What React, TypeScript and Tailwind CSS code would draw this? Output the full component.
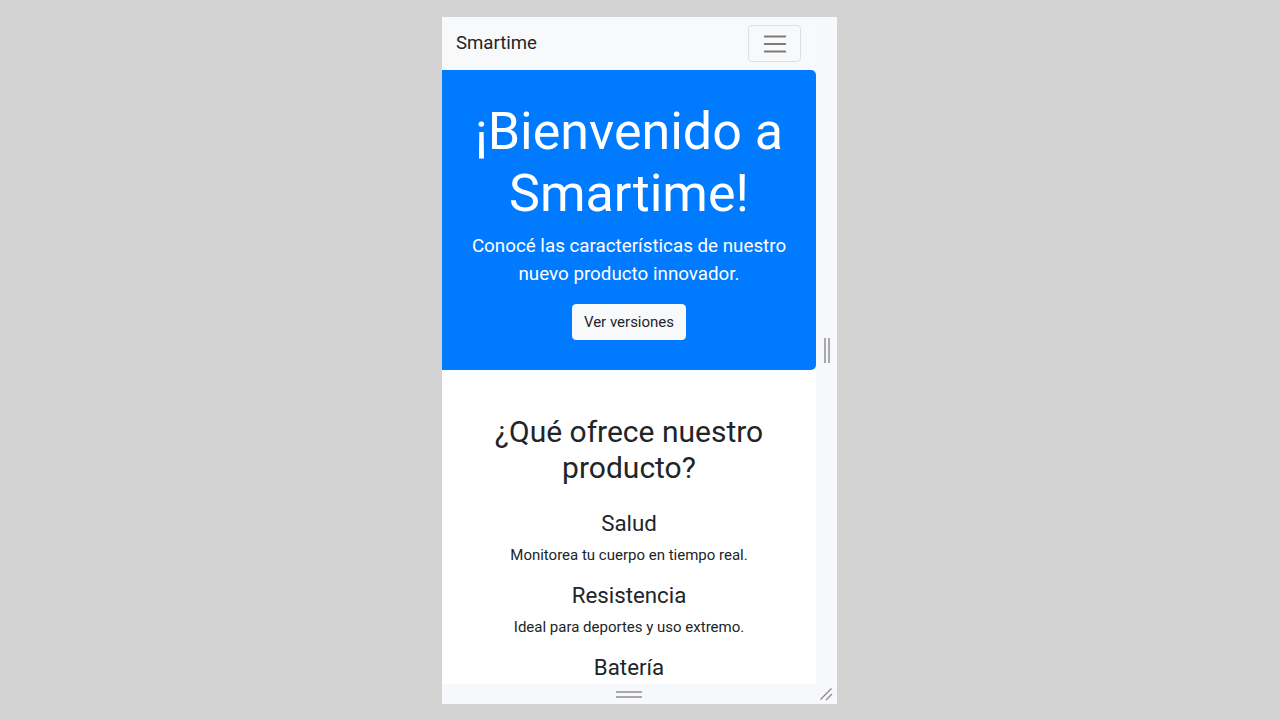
import React from "react";

export default function App() {
  return (
    <div
      className="w-full h-[720px] bg-[#d3d3d3] pl-[442px] pt-[17px] overflow-hidden"
      style={{ fontFamily: "Roboto, 'Liberation Sans', sans-serif" }}
    >
      <div className="w-[395px] h-[687px] bg-[#f7f8fb] flex flex-col relative">
        <div className="flex h-[667px]">
          <div className="w-[374px] h-full bg-white overflow-hidden text-[#212529]">
            {/* Navbar */}
            <nav className="h-[53px] bg-[#f8f9fa] flex items-center justify-between pl-[14px] pr-[15px]">
              <span className="text-[18.6px] leading-[28px] -mt-[2px]">Smartime</span>
              <button className="w-[53px] h-[37px] border border-[#dedfe0] rounded-[4px] flex items-center justify-center">
                <svg width="28" height="28" viewBox="0 0 30 30">
                  <path
                    d="M4 7h22M4 15h22M4 23h22"
                    stroke="rgba(0,0,0,0.5)"
                    strokeWidth="2"
                    strokeLinecap="round"
                  />
                </svg>
              </button>
            </nav>

            {/* Jumbotron */}
            <section className="bg-[#007bff] rounded-r-[5px] pt-[31px] pb-[30px] px-[15px] text-white text-center">
              <h1 className="text-[52px] leading-[62px] font-normal mb-[7px]">
                ¡Bienvenido a Smartime!
              </h1>
              <p className="text-[18.8px] leading-[28px] font-normal mb-[16px]">
                Conocé las características de nuestro nuevo producto innovador.
              </p>
              <button className="bg-[#f8f9fa] text-[#212529] text-[15px] leading-[22px] px-[11px] py-[6px] border border-[#f8f9fa] rounded-[4px]">
                Ver versiones
              </button>
            </section>

            {/* Features */}
            <section className="pt-[44px] px-[15px] text-center">
              <h2 className="text-[30px] leading-[36px] font-normal mb-[24px]">
                ¿Qué ofrece nuestro producto?
              </h2>
              <h4 className="text-[22.3px] leading-[27px] font-normal mb-[7px]">Salud</h4>
              <p className="text-[15px] leading-[22px] mb-[16px]">
                Monitorea tu cuerpo en tiempo real.
              </p>
              <h4 className="text-[22.3px] leading-[27px] font-normal mb-[7px]">Resistencia</h4>
              <p className="text-[15px] leading-[22px] mb-[16px]">
                Ideal para deportes y uso extremo.
              </p>
              <h4 className="text-[22.3px] leading-[27px] font-normal mb-[7px]">Batería</h4>
            </section>
          </div>

          {/* Right resize strip */}
          <div className="flex-1 flex items-center justify-center">
            <div className="flex gap-[2px]">
              <div className="w-[2px] h-[25px] bg-[#a8a8a8]" />
              <div className="w-[2px] h-[25px] bg-[#a8a8a8]" />
            </div>
          </div>
        </div>

        {/* Bottom resize strip */}
        <div className="flex-1 relative flex">
          <div className="w-[374px] flex items-center justify-center">
            <div className="flex flex-col gap-[3px]">
              <div className="w-[26px] h-[2px] bg-[#a8a8a8]" />
              <div className="w-[26px] h-[2px] bg-[#a8a8a8]" />
            </div>
          </div>
          <svg
            className="absolute right-[4px] bottom-[3px]"
            width="14"
            height="14"
            viewBox="0 0 14 14"
          >
            <path d="M1.5 12.5L12.5 1.5M7 13L13 7" stroke="#8a8a8a" strokeWidth="1.4" />
          </svg>
        </div>
      </div>
    </div>
  );
}
